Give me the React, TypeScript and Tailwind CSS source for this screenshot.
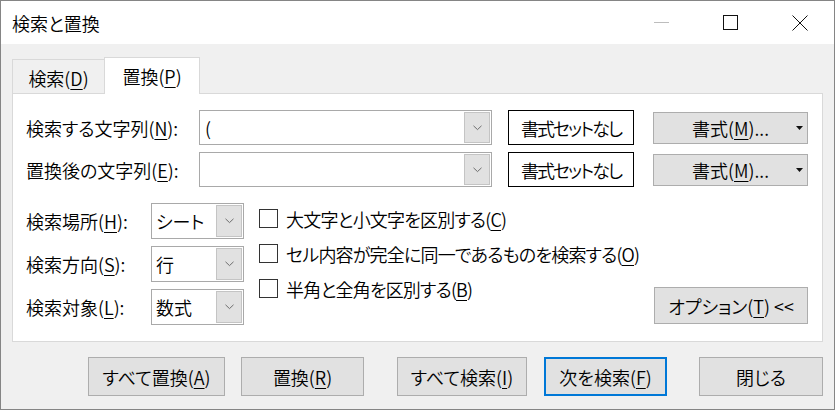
import React from "react";

const U = ({ c }: { c: string }) => (
  <span className="underline decoration-1 underline-offset-[3px]">{c}</span>
);

const Chevron = () => (
  <svg width="9" height="6" viewBox="0 0 9 6" fill="none">
    <path d="M0.5 0.8 L4.5 4.6 L8.5 0.8" stroke="#6d6d6d" strokeWidth="1" />
  </svg>
);

const Combo = ({ w, h, text, textPl }: { w: string; h: string; text?: string; textPl: string }) => (
  <div className={`${w} ${h} border border-[#a9a9a9] bg-white flex items-stretch p-px`}>
    <div className={`flex-1 flex items-center ${textPl}`}>{text}</div>
    <div className="w-[26px] bg-[#e1e1e1] border border-[#c4c4c4] flex items-center justify-center">
      <Chevron />
    </div>
  </div>
);

const GrayBtn = ({ children, cls }: { children: React.ReactNode; cls: string }) => (
  <div className={`${cls} h-[39px] bg-[#e1e1e1] border border-[#adadad] flex items-center justify-center`}>
    {children}
  </div>
);

const Check = ({ children }: { children: React.ReactNode }) => (
  <div className="h-[19px] flex items-center">
    <div className="w-[19px] h-[19px] border border-[#333333] bg-white shrink-0" />
    <div className="ml-[8px] whitespace-nowrap tracking-[-0.8px]">{children}</div>
  </div>
);

export default function App() {
  return (
    <div className="w-[835px] h-[410px] border border-[#858585] bg-[#f0f0f0] text-black text-[18px] leading-none [font-weight:350] font-['Noto_Sans_CJK_JP','Noto_Sans',sans-serif] [font-feature-settings:'palt'] flex flex-col overflow-hidden">
      {/* title bar */}
      <div className="h-[43px] bg-white flex items-center shrink-0">
        <div className="pl-[11px] flex-1">検索と置換</div>
        <div className="w-[69px] h-full flex items-center justify-center">
          <div className="w-[15px] h-px bg-[#bdbdbd]" />
        </div>
        <div className="w-[69px] h-full flex items-center justify-center">
          <div className="w-[15px] h-[15px] border border-[#111]" />
        </div>
        <div className="w-[69px] h-full flex items-center justify-center">
          <svg width="16" height="16" viewBox="0 0 16 16">
            <path d="M0.5 0.5 L15.5 15.5 M15.5 0.5 L0.5 15.5" stroke="#111" strokeWidth="1" />
          </svg>
        </div>
      </div>

      {/* body */}
      <div className="flex-1 flex flex-col px-[11px] pt-[13px]">
        {/* tabs */}
        <div className="h-[36px] flex items-end">
          <div className="w-[92px] h-[34px] border-t border-l border-[#d9d9d9] flex items-center justify-center pt-[2px]">
            検索(<U c="D" />)
          </div>
          <div className="w-[96px] h-[37px] border-t border-x border-[#d9d9d9] bg-white relative z-10 -mb-px flex items-center justify-center">
            置換(<U c="P" />)
          </div>
        </div>

        {/* panel */}
        <div className="h-[249px] border border-[#d9d9d9] bg-white pt-[16px] pl-[13px] pr-[14px] flex flex-col">
          <div className="flex flex-col gap-[7px]">
            {[
              { label: "検索する文字列", m: "N", text: "(" },
              { label: "置換後の文字列", m: "E", text: "" },
            ].map((r) => (
              <div key={r.m} className="h-[35px] flex items-center">
                <div className="w-[173px] whitespace-nowrap">
                  {r.label}(<U c={r.m} />):
                </div>
                <Combo w="w-[293px]" h="h-[35px]" text={r.text} textPl="pl-[4px]" />
                <div className="ml-[16px] w-[126px] h-[35px] border border-black flex items-center justify-center tracking-[-2px]">
                  書式セットなし
                </div>
                <div className="ml-auto w-[155px] h-[32px] bg-[#e1e1e1] border border-[#adadad] flex items-center justify-center relative">
                  <span>
                    書式(<U c="M" />)...
                  </span>
                  <svg className="absolute right-[4px] top-[13px]" width="7" height="4" viewBox="0 0 7 4">
                    <path d="M0 0 L7 0 L3.5 4 Z" fill="#111" />
                  </svg>
                </div>
              </div>
            ))}
          </div>

          <div className="mt-[16px] flex">
            <div className="flex flex-col gap-[7px]">
              {[
                { label: "検索場所", m: "H", v: "シート" },
                { label: "検索方向", m: "S", v: "行" },
                { label: "検索対象", m: "L", v: "数式" },
              ].map((r) => (
                <div key={r.m} className="h-[36px] flex items-center">
                  <div className="w-[125px] whitespace-nowrap">
                    {r.label}(<U c={r.m} />):
                  </div>
                  <Combo w="w-[93px]" h="h-[36px]" text={r.v} textPl="pl-[3px]" />
                </div>
              ))}
            </div>
            <div className="ml-[15px] pt-[6px] flex flex-col gap-[16px]">
              <Check>
                大文字と小文字を区別する(<U c="C" />)
              </Check>
              <Check>
                セル内容が完全に同一であるものを検索する(<U c="O" />)
              </Check>
              <Check>
                半角と全角を区別する(<U c="B" />)
              </Check>
            </div>
            <div className="ml-auto self-end mb-[1px] w-[154px] h-[37px] bg-[#e1e1e1] border border-[#adadad] flex items-center justify-center whitespace-nowrap">
              オプション(<U c="T" />)&nbsp;&lt;&lt;
            </div>
          </div>
        </div>

        {/* bottom buttons */}
        <div className="mt-[15px] ml-[76px] flex">
          <GrayBtn cls="w-[137px]">
            すべて置換(<U c="A" />)
          </GrayBtn>
          <GrayBtn cls="ml-[16px] w-[123px]">
            置換(<U c="R" />)
          </GrayBtn>
          <GrayBtn cls="ml-[33px] w-[130px]">
            すべて検索(<U c="I" />)
          </GrayBtn>
          <div className="ml-[17px] w-[123px] h-[39px] bg-[#e1e1e1] border-2 border-[#0078d7] flex items-center justify-center">
            次を検索(<U c="F" />)
          </div>
          <GrayBtn cls="ml-[32px] w-[124px]">閉じる</GrayBtn>
        </div>
      </div>
    </div>
  );
}
